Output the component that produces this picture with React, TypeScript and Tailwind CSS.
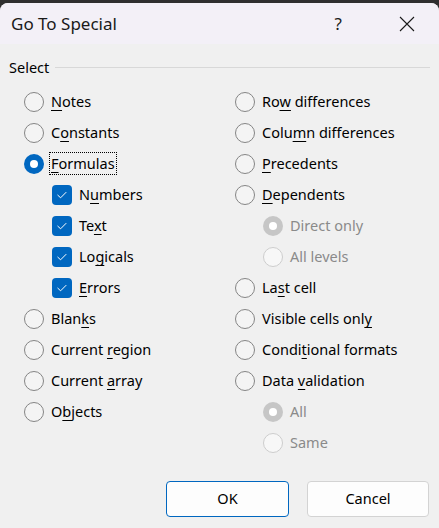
import React from "react";

type Item = {
  label: string;
  u?: number;
  kind: "radio" | "check";
  checked?: boolean;
  disabled?: boolean;
  sub?: boolean;
  focus?: boolean;
};

const left: Item[] = [
  { label: "Notes", u: 0, kind: "radio" },
  { label: "Constants", u: 1, kind: "radio" },
  { label: "Formulas", u: 0, kind: "radio", checked: true, focus: true },
  { label: "Numbers", u: 1, kind: "check", checked: true, sub: true },
  { label: "Text", u: 2, kind: "check", checked: true, sub: true },
  { label: "Logicals", u: 2, kind: "check", checked: true, sub: true },
  { label: "Errors", u: 0, kind: "check", checked: true, sub: true },
  { label: "Blanks", u: 4, kind: "radio" },
  { label: "Current region", u: 8, kind: "radio" },
  { label: "Current array", u: 8, kind: "radio" },
  { label: "Objects", u: 1, kind: "radio" },
];

const right: Item[] = [
  { label: "Row differences", u: 2, kind: "radio" },
  { label: "Column differences", u: 4, kind: "radio" },
  { label: "Precedents", u: 0, kind: "radio" },
  { label: "Dependents", u: 0, kind: "radio" },
  { label: "Direct only", kind: "radio", checked: true, disabled: true, sub: true },
  { label: "All levels", kind: "radio", disabled: true, sub: true },
  { label: "Last cell", u: 2, kind: "radio" },
  { label: "Visible cells only", u: 17, kind: "radio" },
  { label: "Conditional formats", u: 5, kind: "radio" },
  { label: "Data validation", u: 5, kind: "radio" },
  { label: "All", kind: "radio", checked: true, disabled: true, sub: true },
  { label: "Same", kind: "radio", disabled: true, sub: true },
];

function Label({ text, u }: { text: string; u?: number }) {
  if (u === undefined || u >= text.length) return <>{text}</>;
  return (
    <>
      {text.slice(0, u)}
      <span className="underline decoration-1 underline-offset-[3px]">{text[u]}</span>
      {text.slice(u + 1)}
    </>
  );
}

function Radio({ checked, disabled }: { checked?: boolean; disabled?: boolean }) {
  if (checked) {
    return (
      <span
        className={`flex h-5 w-5 shrink-0 items-center justify-center rounded-full ${
          disabled ? "bg-[#c6c6c6]" : "bg-[#0067c0]"
        }`}
      >
        <span className="h-2 w-2 rounded-full bg-white" />
      </span>
    );
  }
  return (
    <span
      className={`h-5 w-5 shrink-0 rounded-full border ${
        disabled ? "border-[#cdcdcd] bg-[#f7f7f7]" : "border-[#858585] bg-[#f4f4f4]"
      }`}
    />
  );
}

function Check() {
  return (
    <span className="flex h-5 w-5 shrink-0 items-center justify-center rounded-[4px] bg-[#0067c0]">
      <svg width="20" height="20" viewBox="0 0 20 20" fill="none">
        <path d="M5.8 10.2 L8.6 12.8 L14 7.4" stroke="white" strokeWidth="1" strokeLinecap="round" strokeLinejoin="round" />
      </svg>
    </span>
  );
}

function Row({ item }: { item: Item }) {
  return (
    <div className={`flex h-[31px] items-center ${item.sub ? "pl-[28px]" : ""}`}>
      {item.kind === "radio" ? <Radio checked={item.checked} disabled={item.disabled} /> : <Check />}
      <span
        className={`whitespace-nowrap leading-[21px] ${item.disabled ? "text-[#8a8a8a]" : "text-black"} ${
          item.focus ? "ml-[5px] border border-dotted border-black px-[1px]" : "ml-[7px]"
        }`}
      >
        <Label text={item.label} u={item.u} />
      </span>
    </div>
  );
}

export default function App() {
  return (
    <div className="h-[528px] w-[439px] bg-[#2f2f2f] pt-[3px]" style={{ fontFamily: '"Noto Sans", "Open Sans", sans-serif' }}>
      <div className="flex h-[525px] flex-col overflow-hidden rounded-t-[8px] bg-[#f0f0f0]">
        <div className="flex h-[41px] shrink-0 items-center bg-[#f3f0f7] pl-[11px] pr-[24px]">
          <span className="text-[17px] text-[#1a1a1a]">Go To Special</span>
          <span className="ml-auto text-[17px] text-[#1a1a1a]">?</span>
          <svg className="ml-[57px]" width="16" height="16" viewBox="0 0 16 16">
            <path d="M1 1 L15 15 M15 1 L1 15" stroke="#1a1a1a" strokeWidth="1.1" />
          </svg>
        </div>

        <div className="flex items-center pl-[9px] pr-[9px] pt-[13px]">
          <span className="text-[14.5px] leading-[20px] text-black">Select</span>
          <span className="ml-[6px] h-px flex-1 bg-[#d8d8d8]" />
        </div>

        <div className="mt-[9px] flex pl-[24px] text-[14.5px]">
          <div className="w-[211px]">
            {left.map((it) => (
              <Row key={it.label} item={it} />
            ))}
          </div>
          <div className="flex-1">
            {right.map((it) => (
              <Row key={it.label} item={it} />
            ))}
          </div>
        </div>

        <div className="mt-[23px] flex justify-end gap-[18px] pr-[10px] text-[14.5px]">
          <button className="h-[36px] w-[123px] rounded-[4px] border border-[#0067c0] bg-[#fdfdfd] text-black">OK</button>
          <button className="h-[36px] w-[122px] rounded-[4px] border border-[#d3d3d3] bg-[#fdfdfd] text-black">Cancel</button>
        </div>
      </div>
    </div>
  );
}
